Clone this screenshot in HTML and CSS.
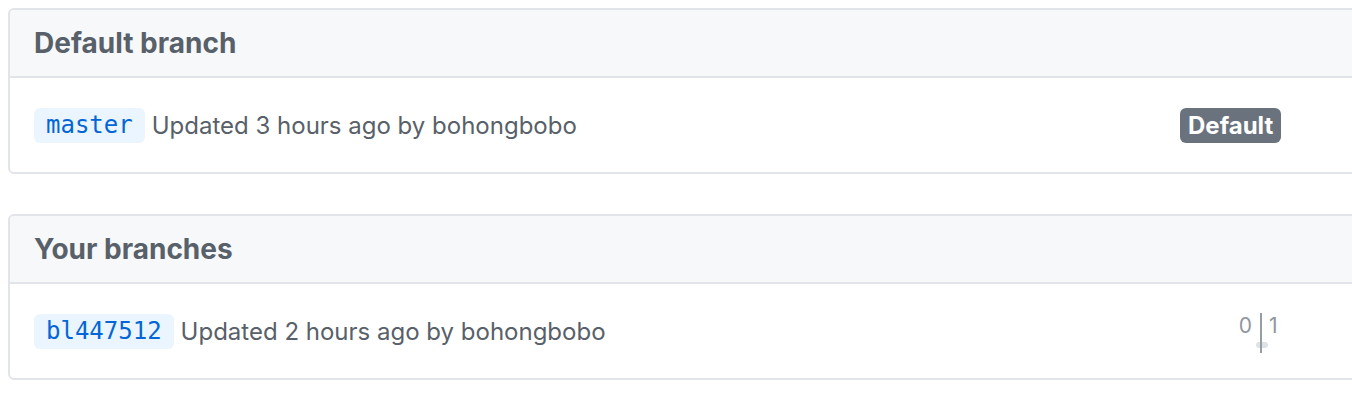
FILE: index.html
```html
<!DOCTYPE html>
<html lang="en">
<head>
<meta charset="utf-8">
<title>Branches</title>
<link rel="stylesheet" href="styles.css">
</head>
<body>
  <div class="page">
    <section class="box">
      <div class="box-header">
        <h3 class="box-title">Default branch</h3>
      </div>
      <div class="box-row">
        <div class="branch-details">
          <a class="branch-name" href="#">master</a>
          <span class="branch-updated">Updated 3 hours ago by <a class="muted-link" href="#">bohongbobo</a></span>
        </div>
        <div class="branch-meta">
          <span class="label-default">Default</span>
        </div>
      </div>
    </section>

    <section class="box">
      <div class="box-header">
        <h3 class="box-title">Your branches</h3>
      </div>
      <div class="box-row">
        <div class="branch-details">
          <a class="branch-name" href="#">bl447512</a>
          <span class="branch-updated">Updated 2 hours ago by <a class="muted-link" href="#">bohongbobo</a></span>
        </div>
        <div class="branch-meta">
          <div class="ab-count">
            <div class="ab-half ab-behind">
              <span class="ab-value">0</span>
              <span class="ab-bar ab-bar-behind"></span>
            </div>
            <div class="ab-divider"></div>
            <div class="ab-half ab-ahead">
              <span class="ab-value">1</span>
              <span class="ab-bar ab-bar-ahead"></span>
            </div>
          </div>
        </div>
      </div>
    </section>
  </div>
</body>
</html>
```

FILE: styles.css
```css
html, body {
  margin: 0;
  padding: 0;
  background: #ffffff;
  overflow: hidden;
}

body {
  font-family: Inter, "Liberation Sans", Arial, sans-serif;
  color: #586069;
}

.page {
  padding: 8px 0 0 8px;
  display: flex;
  flex-direction: column;
  gap: 40px;
  overflow: hidden;
}

.box {
  width: 1420px;
  flex-shrink: 0;
  border: 2px solid #e1e4e8;
  border-radius: 6px;
  background: #ffffff;
  overflow: hidden;
}

.box-header {
  background: #f6f8fa;
  border-bottom: 2px solid #e1e4e8;
  height: 66px;
  display: flex;
  align-items: center;
  padding: 0 24px;
}

.box-title {
  margin: 0;
  font-size: 28px;
  font-weight: 700;
  color: #586069;
  line-height: 1;
}

.box-row {
  height: 94px;
  padding: 0 24px;
  display: flex;
  align-items: center;
}

.branch-details {
  flex: 1;
  display: flex;
  align-items: center;
  gap: 7px;
}

.branch-name {
  font-family: "DejaVu Sans Mono", "Liberation Mono", monospace;
  font-size: 24px;
  line-height: 35px;
  height: 35px;
  padding: 0 12px;
  background: #eaf5ff;
  color: #0366d6;
  border-radius: 6px;
  text-decoration: none;
}

.branch-updated {
  font-size: 24px;
  color: #586069;
}

.muted-link {
  color: #586069;
  text-decoration: none;
}

.branch-meta {
  width: 220px;
  margin-right: 6px;
  display: flex;
  align-items: center;
}

.label-default {
  display: inline-block;
  background: #6a737d;
  color: #ffffff;
  font-weight: 700;
  font-size: 24px;
  line-height: 35px;
  height: 35px;
  padding: 0 8px;
  border-radius: 6px;
}

.ab-count {
  margin-left: 44px;
  margin-top: 4px;
  display: flex;
  height: 40px;
}

.ab-half {
  width: 36px;
  display: flex;
  flex-direction: column;
  justify-content: space-between;
  padding: 5px 0 5px;
  box-sizing: border-box;
}

.ab-behind {
  align-items: flex-end;
}

.ab-ahead {
  align-items: flex-start;
}

.ab-value {
  font-size: 21px;
  line-height: 16px;
  color: #8f979f;
}

.ab-behind .ab-value {
  padding-right: 8px;
}

.ab-ahead .ab-value {
  padding-left: 7px;
}

.ab-divider {
  width: 2px;
  background: #959da5;
}

.ab-bar {
  height: 6px;
  background: #dfe2e5;
}

.ab-bar-behind {
  width: 4px;
  border-radius: 3px 0 0 3px;
}

.ab-bar-ahead {
  width: 6px;
  border-radius: 0 3px 3px 0;
}
```
